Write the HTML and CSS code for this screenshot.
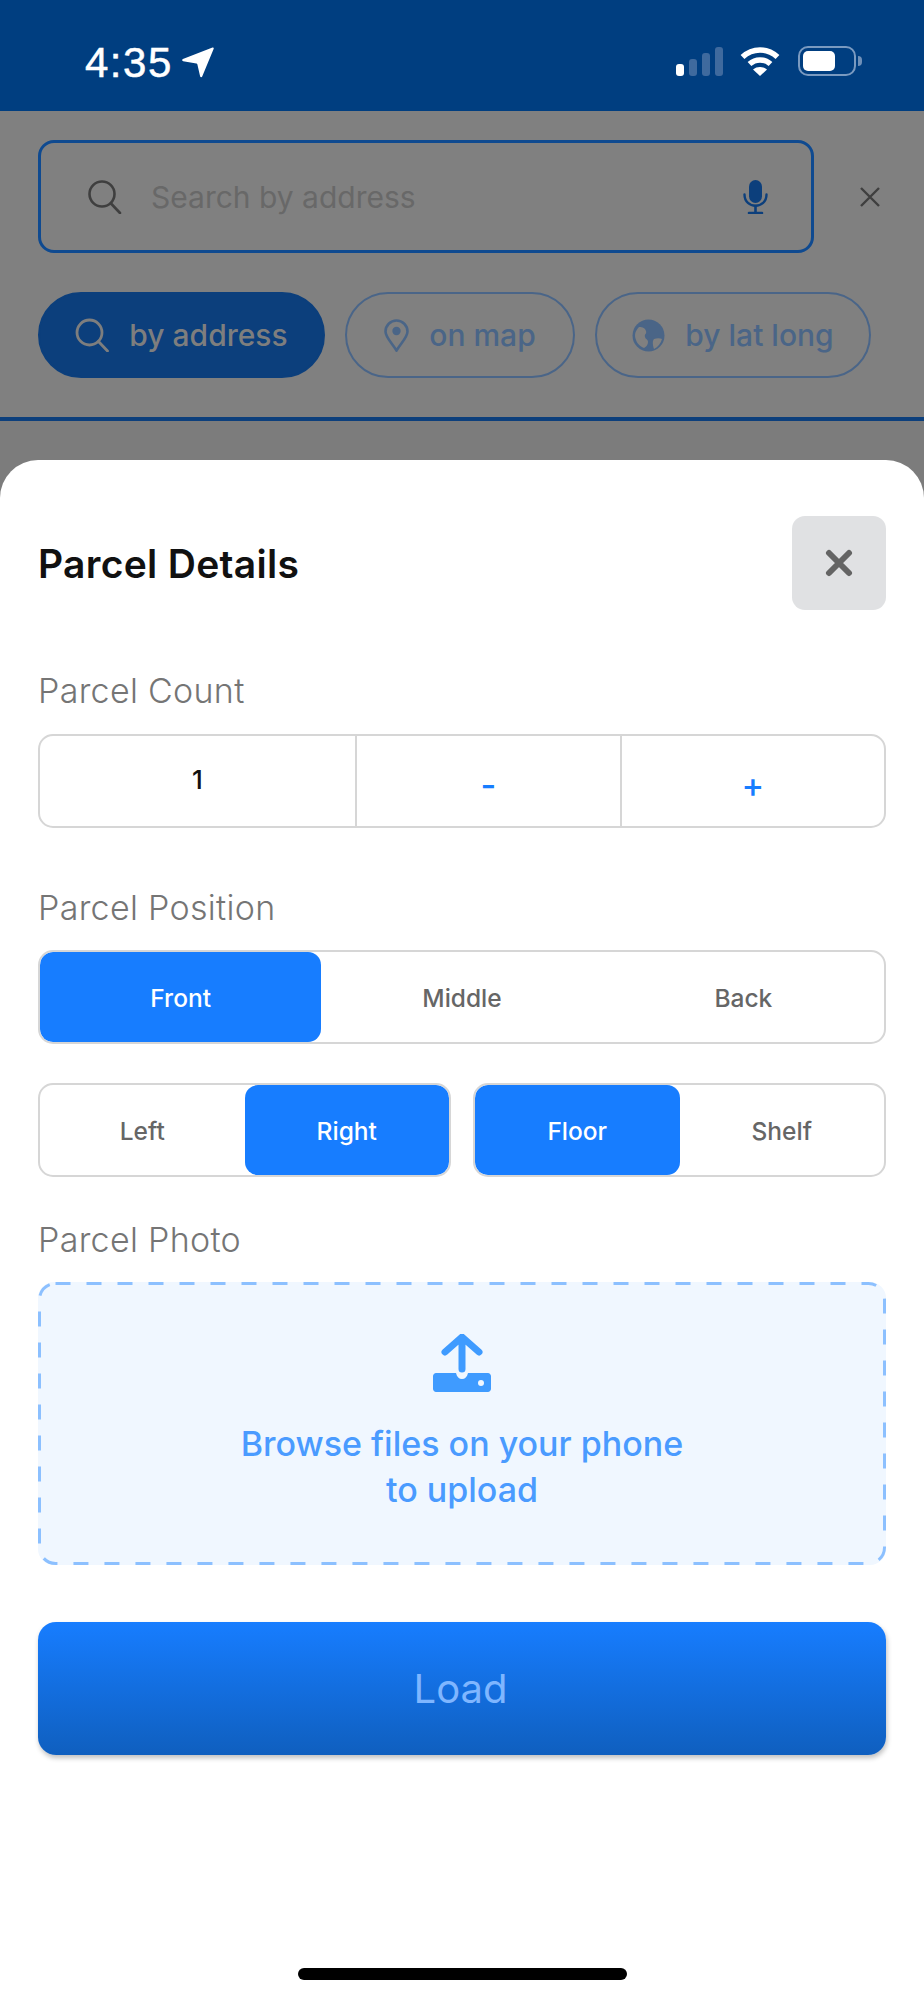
FILE: index.html
```html
<!DOCTYPE html>
<html lang="en">
<head>
  <meta charset="UTF-8">
  <meta name="viewport" content="width=device-width, initial-scale=1.0">
  <title>Parcel Details</title>
  <link rel="stylesheet" href="styles.css">
</head>
<body>

  <!-- Status Bar -->
  <div class="status-bar">
    <div class="status-time">
      <span>4:35</span>
      <svg class="status-arrow" width="32" height="31" viewBox="0 0 32 31"><path d="M30.500 .6c.7-.3 1.400.4 1.200 1.100L20.200 29.400c-.4 1-1.800 1-2.100-.1l-2.700-11.800c-.1-.5-.5-.8-1-.9L1.200 14.200c-1.200-.2-1.400-1.800-.3-2.300z" fill="#fff"/></svg>
    </div>
    <div class="status-icons">
      <div class="signal">
        <span class="bar bar-1"></span>
        <span class="bar bar-2"></span>
        <span class="bar bar-3"></span>
        <span class="bar bar-4"></span>
      </div>
      <svg class="wifi" width="40" height="30" viewBox="0 0 40 30" fill="none" stroke="#fff" stroke-width="5.500">
        <path d="M2.500 11C12.500 1.500 27.500 1.500 37.500 11"/>
        <path d="M9.500 18C15.500 12.500 24.500 12.500 30.500 18"/>
        <path d="M20 30l-7-6.500c4-3.300 10-3.300 14 0z" fill="#fff" stroke="none"/>
      </svg>
      <div class="battery">
        <div class="battery-body"><div class="battery-fill"></div></div>
        <div class="battery-nub"></div>
      </div>
    </div>
  </div>

  <!-- Search Section (dimmed behind the sheet) -->
  <div class="search-area">
    <div class="search-row">
      <div class="search-box">
        <svg width="36" height="34" viewBox="0 0 36 34" fill="none" stroke="#3f3f3f" stroke-width="2.600" stroke-linecap="round"><circle cx="15" cy="14" r="12.500"/><path d="M24 23.500l9 9.500"/></svg>
        <span class="search-placeholder">Search by address</span>
        <svg class="mic" width="25" height="34" viewBox="0 0 25 34" fill="none" stroke="#0c3f7c" stroke-width="2.400" stroke-linecap="round"><rect x="6" y="0" width="13" height="23" rx="6.500" fill="#0c3f7c" stroke="none"/><path d="M1.500 14.500c0 15 22 15 22 0"/><path d="M12.500 26v6M6 33h13" stroke-width="2.600"/></svg>
      </div>
      <svg class="search-close" width="22" height="22" viewBox="0 0 22 22" stroke="#3f3f3f" stroke-width="2.400"><path d="M2 2l18 18M20 2L2 20"/></svg>
    </div>

    <div class="pills">
      <div class="pill pill-address active">
        <svg width="34" height="34" viewBox="0 0 34 34" fill="none" stroke="#7e7e7e" stroke-width="2.800" stroke-linecap="round"><circle cx="14.500" cy="14.500" r="12.500"/><path d="M23.500 23.500l9 9.500"/></svg>
        by address
      </div>
      <div class="pill pill-map">
        <svg width="25" height="33" viewBox="0 0 25 33" fill="none" stroke="#4a6587" stroke-width="2.600"><path d="M12.500 31.500C7 23 1.500 18 1.500 12.500a11 11 0 0 1 22 0C23.500 18 18 23 12.500 31.500z"/><circle cx="12.500" cy="12" r="4.200" fill="#4a6587" stroke="none"/></svg>
        on map
      </div>
      <div class="pill pill-latlong">
        <svg width="33" height="33" viewBox="0 0 33 33"><circle cx="16.500" cy="16.500" r="16" fill="#4a6587"/><path d="M7 8c4 0 6 1 7 4s-2 3-1 6 3 2 3 5-2 5-4 6c-6-2-9-8-9-13 0-3 2-6 4-8zM22 20c3-1 6-1 8 0-1 4-4 8-8 10-1-3-2-8 0-10z" fill="#808080"/></svg>
        by lat long
      </div>
    </div>

    <div class="divider"></div>
  </div>

  <!-- Parcel Details Sheet -->
  <div class="sheet">
    <div class="sheet-header">
      <div class="sheet-title">Parcel Details</div>
      <button class="sheet-close">
        <svg width="28" height="28" viewBox="0 0 28 28" stroke="#646464" stroke-width="6" stroke-linecap="round"><path d="M4 4l20 20M24 4L4 24"/></svg>
      </button>
    </div>

    <div class="field-label label-count">Parcel Count</div>
    <div class="box counter">
      <div class="counter-value">1</div>
      <div class="counter-btn">-</div>
      <div class="counter-btn">+</div>
    </div>

    <div class="field-label label-position">Parcel Position</div>
    <div class="box segment">
      <div class="seg active">Front</div>
      <div class="seg">Middle</div>
      <div class="seg">Back</div>
    </div>

    <div class="segment-pair">
      <div class="box segment">
        <div class="seg">Left</div>
        <div class="seg active">Right</div>
      </div>
      <div class="box segment">
        <div class="seg active">Floor</div>
        <div class="seg">Shelf</div>
      </div>
    </div>

    <div class="field-label label-photo">Parcel Photo</div>
    <div class="upload">
      <svg class="upload-dashes" width="848" height="283" viewBox="0 0 848 283"><rect x="1.500" y="1.500" width="845" height="280" rx="16" fill="none" stroke="#8cc0ff" stroke-width="3" stroke-dasharray="15 16"/></svg>
      <svg width="58" height="58" viewBox="0 0 58 58">
        <path d="M12 18L29 3l17 15M29 4v31" fill="none" stroke="#3f9bff" stroke-width="7" stroke-linecap="round" stroke-linejoin="round"/>
        <path d="M3 39h20c1 4 3 6 6 6s5-2 6-6h20c1.500 0 3 1.500 3 3v13c0 1.500-1.500 3-3 3H3c-1.500 0-3-1.500-3-3V42c0-1.500 1.500-3 3-3z" fill="#3f9bff"/>
        <circle cx="48" cy="49" r="3" fill="#f0f7ff"/>
      </svg>
      <div class="upload-text">Browse files on your phone<br>to upload</div>
    </div>

    <button class="load-btn">Load</button>

    <div class="home-bar"></div>
  </div>

</body>
</html>
```

FILE: styles.css
```css
/* General Styles */
body {
  font-family: Inter, "Noto Sans", sans-serif;
  margin: 0;
  padding: 0;
  width: 924px;
  height: 1999px;
  overflow: hidden;
  background-color: #7c7c7c;
}

/* Status Bar */
.status-bar {
  height: 111px;
  background-color: #003e80;
  display: flex;
  justify-content: space-between;
  padding: 46px 62px 0 85px;
  box-sizing: border-box;
  color: #fff;
}

.status-time {
  display: flex;
  align-items: flex-start;
  gap: 9px;
  font-family: "Liberation Sans", sans-serif;
  font-size: 42px;
  letter-spacing: 1.5px;
  line-height: 33px;
  -webkit-text-stroke: 0.5px #fff;
}

.status-arrow {
  margin-top: 1px;
}

.status-icons {
  display: flex;
  align-items: flex-start;
  gap: 17px;
}

.signal {
  display: flex;
  align-items: flex-end;
  gap: 5px;
  height: 30px;
}

.signal .bar {
  width: 8px;
  border-radius: 3px;
  background-color: #3f6a9e;
}

.signal .bar-1 { height: 12px; background-color: #fff; }
.signal .bar-2 { height: 17px; }
.signal .bar-3 { height: 23px; }
.signal .bar-4 { height: 29px; }

.battery {
  display: flex;
  align-items: center;
  gap: 2px;
  margin-left: 1px;
}

.battery-body {
  width: 58px;
  height: 30px;
  box-sizing: border-box;
  border: 2px solid #7a9ac0;
  border-radius: 10px;
  padding: 3px;
}

.battery-fill {
  width: 32px;
  height: 100%;
  background-color: #fff;
  border-radius: 5px;
}

.battery-nub {
  width: 4px;
  height: 10px;
  background-color: #6f90b8;
  border-radius: 0 4px 4px 0;
}

/* Search Section */
.search-area {
  background-color: #808080;
  padding: 29px 0 0;
}

.search-row {
  display: flex;
  align-items: center;
  padding: 0 38px;
  gap: 45px;
}

.search-box {
  width: 776px;
  height: 113px;
  box-sizing: border-box;
  border: 3px solid #0f4a90;
  border-radius: 16px;
  display: flex;
  align-items: center;
  padding: 0 43px 0 46px;
  gap: 28px;
}

.search-placeholder {
  flex: 1;
  font-size: 30px;
  color: #686868;
}

.pills {
  display: flex;
  gap: 20px;
  padding: 0 38px;
  margin-top: 39px;
}

.pill {
  height: 86px;
  box-sizing: border-box;
  border: 2px solid #4a6588;
  border-radius: 43px;
  display: flex;
  align-items: center;
  justify-content: center;
  gap: 20px;
  font-size: 30px;
  font-weight: 500;
  color: #4a6587;
}

.pill.active {
  background-color: #0c3f7c;
  border-color: #0c3f7c;
  color: #7e7e7e;
}

.pill-address { width: 287px; }
.pill-map { width: 230px; }
.pill-latlong { width: 276px; }

.divider {
  height: 4px;
  background-color: #0c3f7c;
  margin-top: 39px;
}

/* Sheet */
.sheet {
  margin-top: 39px;
  height: 1540px;
  box-sizing: border-box;
  background-color: #fff;
  border-radius: 38px 38px 0 0;
  padding: 56px 38px 0;
}

.sheet-header {
  display: flex;
  align-items: center;
  justify-content: space-between;
}

.sheet-title {
  font-size: 39px;
  font-weight: 600;
  letter-spacing: 0.3px;
  color: #111;
}

.sheet-close {
  width: 94px;
  height: 94px;
  border: none;
  border-radius: 13px;
  background-color: #e0e1e3;
  display: flex;
  align-items: center;
  justify-content: center;
  padding: 0;
}

.field-label {
  font-size: 34px;
  font-weight: 300;
  letter-spacing: 0.3px;
  line-height: 40px;
  color: #757575;
}

.label-count { margin-top: 61px; margin-bottom: 23px; }
.label-position { margin-top: 60px; margin-bottom: 22px; }
.label-photo { margin-top: 43px; margin-bottom: 22px; }

.box {
  box-sizing: border-box;
  border: 2px solid #d6d6d6;
  border-radius: 15px;
  display: flex;
  background-color: #fff;
}

/* Counter */
.counter {
  height: 94px;
}

.counter-value {
  width: 317px;
  box-sizing: border-box;
  border-right: 2px solid #d6d6d6;
  display: flex;
  align-items: center;
  justify-content: center;
  padding-bottom: 4px;
  font-size: 26px;
  font-weight: 500;
  color: #111;
}

.counter-btn {
  flex: 1;
  display: flex;
  align-items: center;
  justify-content: center;
  font-size: 34px;
  font-weight: 500;
  padding-top: 6px;
  color: #177dff;
}

.counter-btn + .counter-btn {
  border-left: 2px solid #d6d6d6;
}

/* Segments */
.segment {
  height: 94px;
  overflow: hidden;
}

.seg {
  flex: 1;
  display: flex;
  align-items: center;
  justify-content: center;
  padding-top: 2px;
  font-size: 24.500px;
  font-weight: 500;
  color: #666;
  border-radius: 13px;
}

.seg.active {
  background-color: #177dff;
  color: #fff;
}

.segment-pair {
  display: flex;
  gap: 22px;
  margin-top: 39px;
}

.segment-pair .segment {
  flex: 1;
}

/* Upload */
.upload {
  position: relative;
  height: 283px;
  box-sizing: border-box;
  background-color: #f0f7ff;
  border-radius: 16px;
  display: flex;
  flex-direction: column;
  align-items: center;
  padding-top: 52px;
}

.upload-dashes {
  position: absolute;
  top: 0;
  left: 0;
}

.upload-text {
  margin-top: 29px;
  font-size: 34px;
  font-weight: 500;
  line-height: 46px;
  color: #4a9bff;
  text-align: center;
}

/* Load Button */
.load-btn {
  display: block;
  width: 100%;
  height: 133px;
  margin-top: 57px;
  padding: 0 3px 0 0;
  border: none;
  border-radius: 18px;
  background: linear-gradient(#177dff, #0f5fbf);
  box-shadow: 1px 3px 5px rgba(0, 0, 0, 0.25);
  font-family: Inter, "Noto Sans", sans-serif;
  font-size: 40px;
  color: #7fb6ff;
}

/* Home Indicator */
.home-bar {
  width: 329px;
  height: 12px;
  margin: 213px auto 0;
  background-color: #000;
  border-radius: 6px;
}
```
